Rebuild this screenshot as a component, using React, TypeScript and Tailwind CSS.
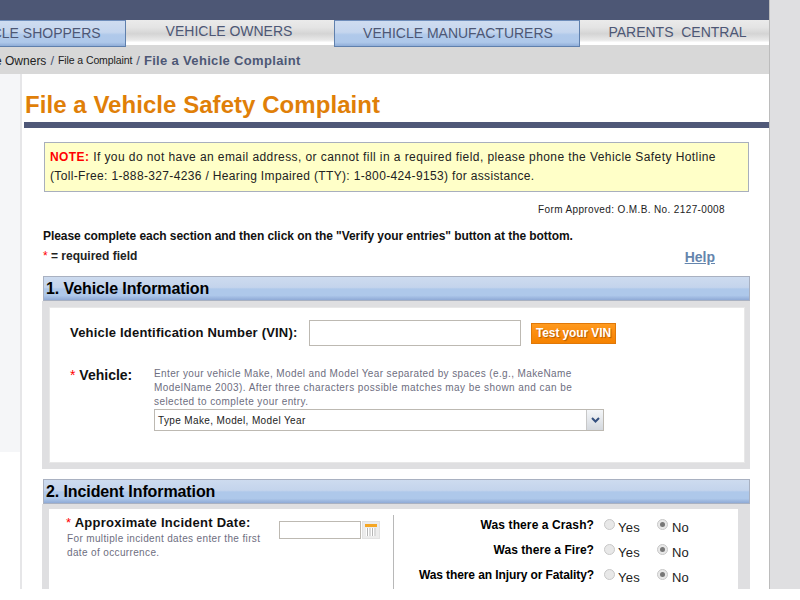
import React from 'react';

const blueTab = 'bg-[linear-gradient(180deg,#cfdcf0_0%,#c5d6ee_45%,#b0c9ea_55%,#aec8ea_85%,#8fadd8_100%)] border border-[#5f80ad] border-t-[#6f8dba]';
const grayTab = 'h-[25px] bg-[linear-gradient(180deg,#ebebeb_0%,#e4e4e4_30%,#d4d4d4_55%,#e8e8e8_80%,#ffffff_90%,#ffffff_100%)]';
const sectionBar = 'h-[25px] border border-[#a9b1c1] bg-[linear-gradient(180deg,#cddbef_0%,#c4d4ec_45%,#aec8ea_52%,#aec8ea_80%,#8faad6_100%)] pl-[2px] text-[16px] leading-[23px] font-bold tracking-[-0.1px] text-black';

function Req() {
  return <span className="text-[#f00] font-normal">*</span>;
}

function Radio({ checked }: { checked?: boolean }) {
  return (
    <span className="flex h-[11px] w-[11px] items-center justify-center rounded-full border border-[#c8c8c8] bg-[#e8e8e8]">
      {checked && <span className="h-[5px] w-[5px] rounded-full bg-[#777]" />}
    </span>
  );
}

function Question({ label, spacing }: { label: string; spacing: string }) {
  return (
    <div className="flex h-[25px] items-center">
      <span className={`w-[199px] text-right text-[12px] font-bold text-black ${spacing}`}>{label}</span>
      <span className="ml-[10px] flex w-[53px] items-center gap-[3px]">
        <Radio />
        <span className="mt-[7px] text-[13px] tracking-[0.3px] text-[#222]">Yes</span>
      </span>
      <span className="flex items-center gap-[4px]">
        <Radio checked />
        <span className="mt-[7px] text-[13px] text-[#222]">No</span>
      </span>
    </div>
  );
}

export default function App() {
  return (
    <div className="h-[600px] overflow-hidden bg-white font-['Liberation_Sans',Arial,sans-serif]">
      <div className="flex h-[589px] overflow-hidden">
        <div className="w-[769px] shrink-0 overflow-hidden">
          <div className="h-[20px] bg-[#4d5775]" />

          {/* top nav */}
          <div className="flex h-[27px] bg-[#d8d8d8] text-[14px] text-[#4d5775]">
            <div className={`-ml-[60px] w-[186px] pl-[18px] leading-[24px] whitespace-nowrap ${blueTab}`}>VEHICLE SHOPPERS</div>
            <div className={`w-[208px] pr-[2px] text-center leading-[23px] ${grayTab}`}>VEHICLE OWNERS</div>
            <div className={`w-[246px] pl-[2px] text-center leading-[24px] ${blueTab}`}>VEHICLE MANUFACTURERS</div>
            <div className={`w-[189px] pl-[6px] text-center leading-[24px] ${grayTab}`}>
              PARENTS&nbsp; CENTRAL
            </div>
          </div>

          {/* breadcrumb */}
          <div className="flex h-[27px] items-center gap-[4px] bg-[#d8d8d8] whitespace-nowrap">
            <span className="-ml-[37px] text-[12px] text-[#222]">Vehicle Owners</span>
            <span className="text-[13px] text-[#4d5775]">/</span>
            <span className="text-[10.5px] tracking-[-0.1px] text-[#222]">File a Complaint</span>
            <span className="text-[13px] text-[#4d5775]">/</span>
            <span className="text-[13px] font-bold tracking-[0.33px] text-[#4d5775]">File a Vehicle Complaint</span>
          </div>

          <div className="flex h-[515px]">
            {/* left strip */}
            <div className="w-[20px] shrink-0">
              <div className="h-[378px] bg-[#f5f6f8]" />
            </div>
            <div className="w-[2px] shrink-0 bg-[#e6e6e8]" />

            <div className="min-w-0 flex-1">
              <h1 className="mt-[17px] ml-[3px] text-[24px] leading-[28px] font-bold tracking-[0.05px] whitespace-nowrap text-[#e07f08]">
                File a Vehicle Safety Complaint
              </h1>
              <div className="mt-[3px] ml-[2px] h-[6px] bg-[#4f5878]" />

              <div className="pl-[20px] pr-[19px]">
                <div className="mt-[14px] ml-[2px] mr-[1px] h-[50px] border border-[#a8afbd] bg-[#ffffc8] pl-[5px] pt-[5px] text-[12px] leading-[19px] text-[#222] whitespace-nowrap">
                  <div className="tracking-[0.42px]">
                    <b className="text-[#f00]">NOTE:</b> If you do not have an email address, or cannot fill in a required field, please phone the Vehicle Safety Hotline
                  </div>
                  <div className="tracking-[0.345px]">(Toll-Free: 1-888-327-4236 / Hearing Impaired (TTY): 1-800-424-9153) for assistance.</div>
                </div>

                <div className="mt-[12px] pr-[25px] text-right text-[10px] leading-[12px] tracking-[0.37px] text-[#222]">
                  Form Approved: O.M.B. No. 2127-0008
                </div>

                <div className="mt-[13px] ml-[1px] text-[12px] leading-[14px] font-bold tracking-[-0.06px] whitespace-nowrap text-[#111]">
                  Please complete each section and then click on the "Verify your entries" button at the bottom.
                </div>
                <div className="mt-[6px] flex items-start justify-between pr-[35px]">
                  <span className="ml-[1px] text-[12px] leading-[14px] font-bold text-[#222]">
                    <Req /> = required field
                  </span>
                  <a href="#" className="text-[14px] leading-[16px] font-bold text-[#6585ad] underline">Help</a>
                </div>

                {/* section 1 */}
                <div className="mt-[11px]">
                  <div className={`ml-[1px] ${sectionBar}`}>1. Vehicle Information</div>
                  <div className="h-[168px] w-[708px] bg-[#dfdfe1] px-[7px] pt-[6px] pb-[6px]">
                    <div className="h-full w-[696px] border border-[#e8e8e8] bg-white">
                      <div className="flex items-center pt-[12px]">
                        <span className="ml-[20px] w-[239px] text-[13px] font-bold tracking-[0.2px] whitespace-nowrap text-[#111]">
                          Vehicle Identification Number (VIN):
                        </span>
                        <div className="h-[26px] w-[212px] border border-[#bdb9b2] bg-white" />
                        <button className="ml-[10px] h-[21px] w-[85px] border border-[#e07808] bg-[linear-gradient(180deg,#ff9a1f_0%,#fb8c0e_50%,#f58200_100%)] text-[12px] font-bold tracking-[-0.1px] text-white [text-shadow:1px_1px_1px_#b35c00]">
                          Test your VIN
                        </button>
                      </div>

                      <div className="mt-[21px] flex">
                        <span className="-mt-[1px] ml-[20px] w-[84px] text-[14px] leading-[18px] font-bold whitespace-nowrap text-[#111]">
                          <Req /> Vehicle:
                        </span>
                        <div className="w-[450px]">
                          <p className="text-[10px] leading-[14px] whitespace-nowrap text-[#6e6e80]">
                            <span className="block tracking-[0.38px]">Enter your vehicle Make, Model and Model Year separated by spaces (e.g., MakeName</span>
                            <span className="block tracking-[0.44px]">ModelName 2003). After three characters possible matches may be shown and can be</span>
                            <span className="block tracking-[0.42px]">selected to complete your entry.</span>
                          </p>
                          <div className="flex h-[22px] items-center border border-[#bdb9b2] bg-white">
                            <span className="flex-1 pl-[3px] text-[10px] tracking-[0.37px] text-[#222]">Type Make, Model, Model Year</span>
                            <span className="flex h-[20px] w-[17px] items-center justify-center border-l border-[#c8c8c8] bg-[linear-gradient(180deg,#f4f6f9,#d4d8de)]">
                              <svg width="9" height="6" viewBox="0 0 9 6">
                                <path d="M1 1 L4.5 4.5 L8 1" fill="none" stroke="#34507f" strokeWidth="2" />
                              </svg>
                            </span>
                          </div>
                        </div>
                      </div>
                    </div>
                  </div>
                </div>

                {/* section 2 */}
                <div className="mt-[10px]">
                  <div className={`ml-[1px] ${sectionBar}`}>2. Incident Information</div>
                  <div className="h-[90px] w-[708px] bg-[#dfdfe1] pl-[7px] pr-[12px] pt-[5px]">
                    <div className="flex h-full bg-white pt-[6px]">
                      <div className="w-[345px] shrink-0 border-r border-[#b8b8b8]">
                        <div className="flex">
                          <div className="ml-[17px] w-[213px]">
                            <div className="text-[13px] leading-[16px] font-bold tracking-[0.26px] whitespace-nowrap text-[#111]">
                              <Req /> Approximate Incident Date:
                            </div>
                            <p className="mt-[1px] ml-[1px] text-[10px] leading-[14px] tracking-[0.36px] text-[#6e6e80]">
                              For multiple incident dates enter the first<br />date of occurrence.
                            </p>
                          </div>
                          <div className="mt-[6px] flex">
                            <div className="h-[18px] w-[82px] border border-[#bdb9b2] bg-white" />
                            <span className="ml-[1px] flex h-[18px] w-[18px] items-center justify-center border border-[#e2e2e2] bg-[#ececec]">
                              <svg width="14" height="14" viewBox="0 0 14 14">
                                <rect x="1" y="1" width="12" height="3" fill="#f5a623" />
                                <rect x="2" y="5" width="10" height="8" fill="#fff" />
                                <path d="M3.5 5v8M6 5v8M8.5 5v8M11 5v8" stroke="#b5b5b5" strokeWidth="1" />
                              </svg>
                            </span>
                          </div>
                        </div>
                      </div>
                      <div className="-mt-[3px] ml-[1px]">
                        <Question label="Was there a Crash?" spacing="tracking-[0.1px]" />
                        <Question label="Was there a Fire?" spacing="tracking-[0.05px]" />
                        <Question label="Was there an Injury or Fatality?" spacing="tracking-[-0.1px]" />
                      </div>
                    </div>
                  </div>
                </div>
              </div>
            </div>
          </div>
        </div>

        {/* right gutter */}
        <div className="flex-1 border-l border-[#bcbcbc] bg-[#dfdfe1]" />
      </div>
    </div>
  );
}
